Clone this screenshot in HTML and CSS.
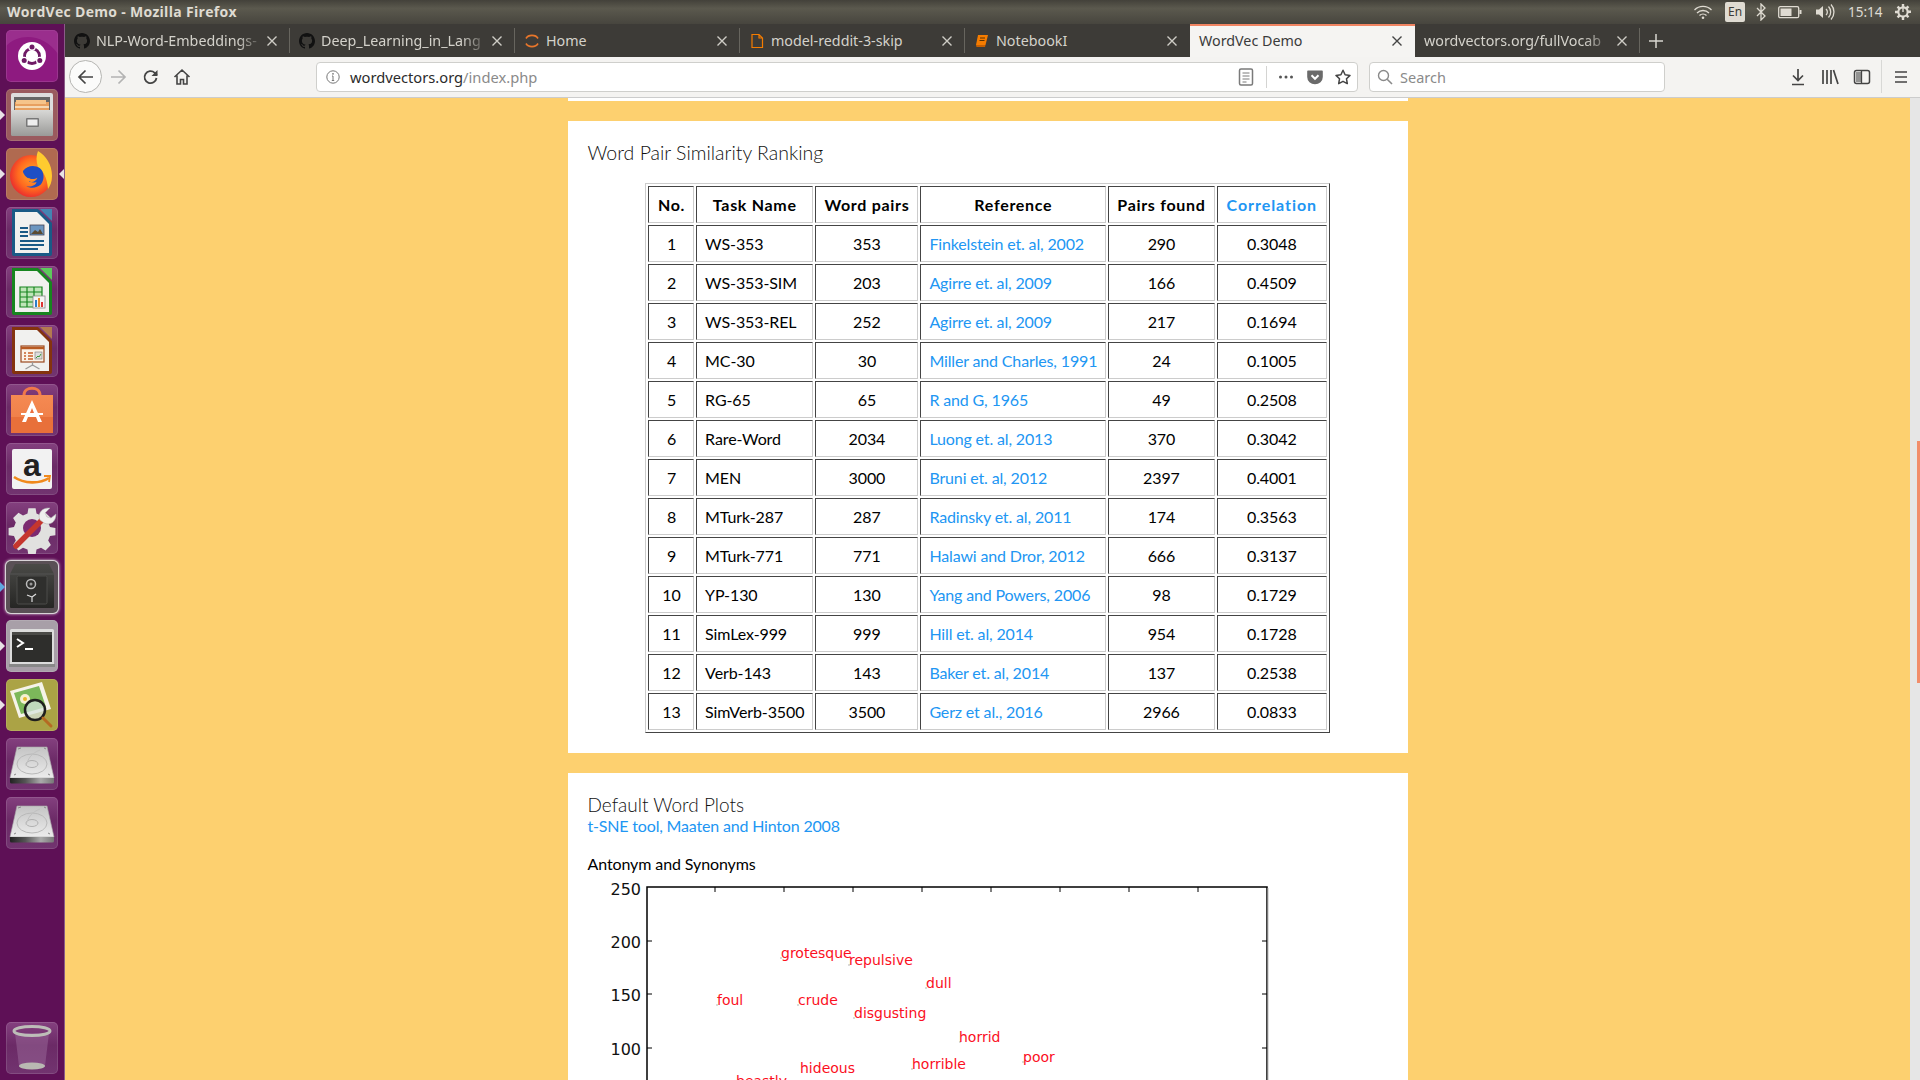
FILE: index.html
```html
<!DOCTYPE html>
<html lang="en">
<head>
<meta charset="utf-8">
<title>WordVec Demo - Mozilla Firefox</title>
<link rel="stylesheet" href="styles.css">
</head>
<body>
<svg class="defs" width="0" height="0" aria-hidden="true">
  <defs>
    <symbol id="gh" viewBox="0 0 16 16"><path fill="#111" d="M8 0C3.6 0 0 3.6 0 8c0 3.5 2.3 6.5 5.5 7.6.4.1.5-.2.5-.4v-1.4c-2.2.5-2.7-1-2.7-1-.4-.9-.9-1.2-.9-1.2-.7-.5.1-.5.1-.5.8.1 1.2.8 1.2.8.7 1.2 1.9.9 2.3.7.1-.5.3-.9.5-1.1-1.8-.2-3.6-.9-3.6-4 0-.9.3-1.6.8-2.1-.1-.2-.4-1 .1-2.1 0 0 .7-.2 2.2.8.6-.2 1.3-.3 2-.3s1.4.1 2 .3c1.5-1 2.2-.8 2.2-.8.4 1.1.2 1.9.1 2.1.5.6.8 1.3.8 2.1 0 3.1-1.9 3.7-3.7 3.9.3.3.6.8.6 1.5v2.2c0 .2.1.5.6.4C13.7 14.5 16 11.5 16 8c0-4.4-3.6-8-8-8z"/></symbol>
    <symbol id="x" viewBox="0 0 12 12"><path d="M1.5 1.5l9 9M10.5 1.5l-9 9" stroke="currentColor" stroke-width="1.4" fill="none"/></symbol>
    <linearGradient id="disk" x1="0" y1="0" x2="0" y2="1"><stop offset="0" stop-color="#c4c4c4"/><stop offset="1" stop-color="#ececec"/></linearGradient>
    <linearGradient id="disk2" x1="0" y1="0" x2="1" y2="0"><stop offset="0" stop-color="#222"/><stop offset=".35" stop-color="#555"/><stop offset=".7" stop-color="#aaa"/><stop offset="1" stop-color="#777"/></linearGradient>
    <linearGradient id="steel" x1="0" y1="0" x2="0" y2="1"><stop offset="0" stop-color="#d8d8d6"/><stop offset="1" stop-color="#9a9a98"/></linearGradient>
    <linearGradient id="shop" x1="0" y1="0" x2="0" y2="1"><stop offset="0" stop-color="#f58a52"/><stop offset="1" stop-color="#ec7a45"/></linearGradient>
    <linearGradient id="safe" x1="0" y1="0" x2="0" y2="1"><stop offset="0" stop-color="#4a4a47"/><stop offset="1" stop-color="#262624"/></linearGradient>
    <radialGradient id="fox" cx=".55" cy=".45" r=".6"><stop offset="0" stop-color="#ffb02e"/><stop offset=".6" stop-color="#ff6a1f"/><stop offset="1" stop-color="#e8262f"/></radialGradient>
    <symbol id="hdd" viewBox="0 0 52 52">
      <path d="M11 9h30l7 31H4z" fill="url(#disk)" stroke="#aaa" stroke-width=".6"/>
      <path d="M4 40h44v4a1.500 1.500 0 0 1-1.500 1.500h-41A1.500 1.500 0 0 1 4 44z" fill="url(#disk2)"/>
      <ellipse cx="26" cy="26" rx="15" ry="10" fill="none" stroke="#b9b9b9"/>
      <ellipse cx="26" cy="26" rx="6" ry="3.500" fill="none" stroke="#b0b0b0"/>
      <path d="M34 12c-8 3-12 8-14 16" fill="none" stroke="#c0c0c0"/>
      <path d="M12 11l3-1M40 11l-2-1M8 37l2-1M44 37l-2-1" stroke="#888"/>
    </symbol>
  </defs>
</svg>

<header class="panel">
  <span class="panel-title">WordVec Demo - Mozilla Firefox</span>
  <div class="indicators">
    <svg class="ind ind-wifi" width="20" height="16" viewBox="0 0 20 16"><path d="M1.500 6a12 12 0 0 1 17 0M4 9a8.500 8.500 0 0 1 12 0M6.500 11.500a5 5 0 0 1 7 0" fill="none" stroke="#dfdbd2" stroke-width="1.300"/><circle cx="10" cy="13.800" r="1.300" fill="#dfdbd2"/></svg>
    <span class="ind-lang">En</span>
    <svg class="ind ind-bt" width="10" height="18" viewBox="0 0 10 18"><path d="M1 5l8 8-4 4V1l4 4-8 8" fill="none" stroke="#dfdbd2" stroke-width="1.300"/></svg>
    <svg class="ind ind-bat" width="24" height="14" viewBox="0 0 24 14"><rect x=".7" y="1.700" width="20" height="11" rx="1.500" fill="none" stroke="#dfdbd2" stroke-width="1.300"/><rect x="2.500" y="3.500" width="11" height="7.500" fill="#dfdbd2"/><rect x="21.500" y="5" width="2" height="4" fill="#dfdbd2"/></svg>
    <svg class="ind ind-vol" width="20" height="18" viewBox="0 0 20 18"><path d="M1 6.500h3l4-3.500v12l-4-3.500H1z" fill="#dfdbd2"/><path d="M11 6a4 4 0 0 1 0 6M13.500 3.500a8 8 0 0 1 0 11M16 1.500a11 11 0 0 1 0 15" fill="none" stroke="#dfdbd2" stroke-width="1.300"/></svg>
    <span class="clock">15:14</span>
    <svg class="ind ind-gear" width="18" height="18" viewBox="0 0 18 18"><path d="M7.800 1h2.400v2.200l1.800.8 1.600-1.500 1.700 1.700-1.500 1.600.8 1.800H17v2.400h-2.400l-.8 1.800 1.500 1.600-1.700 1.700-1.600-1.500-1.800.8V17H7.800v-2.400l-1.800-.8-1.600 1.500-1.700-1.700 1.500-1.600-.8-1.800H1V7.800h2.400l.8-1.800-1.500-1.600 1.700-1.700L6 4.200l1.800-.8z" fill="#dfdbd2"/><circle cx="9" cy="9" r="3.600" fill="#4e4c43"/><path d="M9 5v4" stroke="#dfdbd2" stroke-width="1.400"/></svg>
  </div>
</header>

<div class="desktop">
  <nav class="launcher">
    <div class="tile tile-home">
      <svg viewBox="0 0 52 52" width="52" height="52"><path d="M0 16C14 2 38 4 52 24V4a4 4 0 0 0-4-4H4a4 4 0 0 0-4 4z" fill="#a5429a" opacity=".5"/><circle cx="26" cy="26" r="14" fill="#fff"/><circle cx="26" cy="26" r="7.500" fill="none" stroke="#6f1a66" stroke-width="2.800"/><g fill="#fff"><circle cx="26" cy="17" r="3.800"/><circle cx="18.200" cy="30.500" r="3.800"/><circle cx="33.800" cy="30.500" r="3.800"/></g><g fill="#6f1a66"><circle cx="26" cy="17" r="2.500"/><circle cx="18.200" cy="30.500" r="2.500"/><circle cx="33.800" cy="30.500" r="2.500"/></g></svg>
    </div>
    <div class="tile tile-files">
      <span class="pip"></span>
      <svg viewBox="0 0 52 52" width="52" height="52"><path d="M5 6a2 2 0 0 1 2-2h38a2 2 0 0 1 2 2v16H5z" fill="#ddd"/><rect x="8" y="8" width="36" height="16" fill="#666"/><path d="M9 13h34v10H9z" fill="#e8a060"/><path d="M10 11h30v4H10z" fill="#f6c48a"/><path d="M9 17h34v2H9z" fill="#f5d9b5"/><rect x="5" y="21" width="42" height="26" rx="1.500" fill="url(#steel)"/><rect x="20" y="29" width="13" height="9" rx="1" fill="#777"/><rect x="21.500" y="30.500" width="10" height="6" fill="#eee"/></svg>
    </div>
    <div class="tile tile-fox">
      <span class="pip"></span><span class="pip pip-right"></span>
      <svg viewBox="0 0 52 52" width="52" height="52"><circle cx="25" cy="28" r="21" fill="url(#fox)"/><path d="M32 3c8 5 14 13 14 25 0 6-2 10-4 13-1-12-5-18-10-22-2-6-2-11 0-16z" fill="#ffcb2f"/><g transform="translate(28 28) scale(.85) translate(-28 -28)"><path d="M15 22c5-6 13-8 20-3 5 4 6 13 1 19-4 4-12 5-17 2 6 1 11-1 12-5-3 1-7 1-9-1 2 0 3-1 3-2-3-1-6-2-8-5-1-2-2-3-2-5z" fill="#1f4fc4"/><path d="M21 30c3 2 8 2 11 0-1 3-4 5-7 5-2 0-3-2-4-5z" fill="#ff8a1f"/></g></svg>
    </div>
    <div class="tile">
      <svg viewBox="0 0 52 52" width="52" height="52"><path d="M6 2h26l14 14v31a2 2 0 0 1-2 2H8a2 2 0 0 1-2-2z" fill="#1a5a86"/><path d="M9 5h22l12 12v29H9z" fill="#f1f1ef"/><path d="M34 2h12v12z" fill="#3e8db8" opacity=".9"/><path d="M14 21h8M14 25h8M14 29h8M14 34h24M14 38h24M14 42h18" stroke="#1a5a86" stroke-width="1.800"/><rect x="24" y="18" width="14" height="10" fill="#6c96c0" stroke="#445" stroke-width=".8"/><path d="M25 27l4-4 3 2 2-3 3 5z" fill="#5a4a30"/></svg>
    </div>
    <div class="tile">
      <svg viewBox="0 0 52 52" width="52" height="52"><path d="M6 2h26l14 14v31a2 2 0 0 1-2 2H8a2 2 0 0 1-2-2z" fill="#17851f"/><path d="M9 5h22l12 12v29H9z" fill="#f1f1ef"/><path d="M34 2h12v12z" fill="#5dc95c"/><path d="M14 21h22v20H14z" fill="#bfe5b8"/><path d="M14 21h22v20H14zM14 26h22M14 31h22M14 36h22M21 21v20M28 21v20" fill="none" stroke="#17851f" stroke-width="1.200"/><rect x="27" y="30" width="12" height="12" fill="#f5f5f5" stroke="#888" stroke-width=".8"/><path d="M29 34h2v7h-2z" fill="#2c7fc7"/><path d="M32 32h2v9h-2z" fill="#e8872a"/><path d="M35 36h2v5h-2z" fill="#d33"/></svg>
    </div>
    <div class="tile">
      <svg viewBox="0 0 52 52" width="52" height="52"><path d="M6 2h26l14 14v31a2 2 0 0 1-2 2H8a2 2 0 0 1-2-2z" fill="#84330f"/><path d="M9 5h22l12 12v29H9z" fill="#f1f1ef"/><path d="M34 2h12v12z" fill="#b37a50"/><rect x="15" y="21" width="23" height="16" fill="#fbf3e8" stroke="#9b4a20" stroke-width="1.200"/><path d="M15 23h23" stroke="#b85a22" stroke-width="2.500"/><path d="M18 28h2M22 28h5M18 31h2M22 31h5M18 34h2M22 34h5" stroke="#c9622a" stroke-width="1.500"/><rect x="29" y="27" width="7" height="7" fill="#ddd" stroke="#777" stroke-width=".6"/><path d="M30 33l2-2 1 1 2-3" fill="none" stroke="#3a9a3a"/><path d="M26.500 37v4M26.500 40l-7 4M26.500 40l7 4" stroke="#999" stroke-width="1.300"/></svg>
    </div>
    <div class="tile">
      <svg viewBox="0 0 52 52" width="52" height="52"><path d="M18 11c0-9 16-9 16 0" fill="none" stroke="#f0784a" stroke-width="3"/><path d="M5 11h42v38H5z" fill="url(#shop)"/><path d="M5 33h42v16H5z" fill="#e8703a"/><path d="M26 16l-10 22h4l2-5h8l2 5h4z" fill="#fff"/><path d="M26 24l-2 5h4z" fill="#ec7040"/><path d="M15 29h22v2H15z" fill="#fff"/></svg>
    </div>
    <div class="tile">
      <svg viewBox="0 0 52 52" width="52" height="52"><rect x="6" y="6" width="40" height="40" rx="2" fill="#f2f2f2"/><text x="26" y="33" class="amazon-a">a</text><path d="M8 34c10 7 26 7 35 1" fill="none" stroke="#f08a1d" stroke-width="2.600"/><path d="M38 33l6 0-1 6" fill="none" stroke="#f08a1d" stroke-width="1.800"/></svg>
    </div>
    <div class="tile">
      <svg viewBox="0 0 52 52" width="52" height="52"><path d="M22 4h8l1 6 5 2 5-3 6 6-3 5 2 5 6 1v8l-6 1-2 5 3 5-6 6-5-3-5 2-1 6h-8l-1-6-5-2-5 3-6-6 3-5-2-5-6-1v-8l6-1 2-5-3-5 6-6 5 3 5-2z" transform="translate(26 26) scale(.9) translate(-26 -26)" fill="#e1e1df"/><circle cx="26" cy="26" r="9" fill="#7c2a70"/><path d="M38 16L10 44" stroke="#c5362e" stroke-width="5.500" stroke-linecap="round"/><path d="M34 18c-3-6 2-13 10-12l-5 5 2 4 4 1 5-4c0 8-6 12-12 9z" fill="#eee" stroke="#aaa" stroke-width=".5"/></svg>
    </div>
    <div class="tile tile-safe">
      <span class="pip pip-blue"></span>
      <svg viewBox="0 0 52 52" width="52" height="52"><path d="M9 3h34l5 10v33a1 1 0 0 1-1 1H5a1 1 0 0 1-1-1V13z" fill="url(#safe)"/><path d="M4 13h44" stroke="#555" stroke-width="1"/><rect x="11" y="15" width="30" height="28" rx="1.500" fill="#2f2f2d" stroke="#4d4d4a"/><circle cx="25" cy="23" r="4.500" fill="none" stroke="#bbb" stroke-width="1.500"/><circle cx="25" cy="23" r="1.500" fill="#999"/><path d="M26 36v5M26 36l-5-2M26 36l4-3" stroke="#ddd" stroke-width="1.200"/></svg>
    </div>
    <div class="tile tile-term">
      <span class="pip"></span>
      <svg viewBox="0 0 52 52" width="52" height="52"><rect x="4" y="9" width="44" height="36" rx="1.500" fill="#dcdcdc"/><rect x="6" y="12" width="40" height="30" fill="#2e2e2c"/><path d="M6 12h40v3H6z" fill="#4a4a47"/><path d="M11 19l6 4-6 4" fill="none" stroke="#fff" stroke-width="2"/><path d="M19 29h8" stroke="#fff" stroke-width="2"/><rect x="3" y="44" width="46" height="3" fill="#888"/></svg>
    </div>
    <div class="tile tile-viewer">
      <span class="pip"></span>
      <svg viewBox="0 0 52 52" width="52" height="52"><path d="M4 12l32-9 9 27-32 9z" fill="#f5f3e8"/><path d="M8 14l25-7 7 21-25 7z" fill="#7cb85a"/><circle cx="19" cy="20" r="5" fill="#f5f1d0"/><circle cx="19" cy="20" r="2" fill="#e8b82a"/><circle cx="29" cy="31" r="10" fill="#d7e4de" fill-opacity=".75" stroke="#1f1f1f" stroke-width="2.500"/><path d="M37 39l8 8" stroke="#b56a22" stroke-width="3" stroke-linecap="round"/></svg>
    </div>
    <div class="tile"><svg width="52" height="52"><use href="#hdd"/></svg></div>
    <div class="tile"><svg width="52" height="52"><use href="#hdd"/></svg></div>
    <div class="tile tile-trash">
      <svg viewBox="0 0 52 52" width="52" height="52"><path d="M9 11l4 33c0 3 26 3 26 0l4-33z" fill="#a070a0" fill-opacity=".45"/><ellipse cx="26" cy="44" rx="13" ry="3.500" fill="#b9b9b2"/><ellipse cx="26" cy="9" rx="18" ry="4.500" fill="none" stroke="#bdbdb8" stroke-width="3"/></svg>
    </div>
  </nav>

  <div class="browser">
    <div class="tabstrip">
      <div class="tab">
        <svg class="favicon" width="16" height="16"><use href="#gh"/></svg>
        <span class="tab-label tab-fade">NLP-Word-Embeddings-</span>
        <svg class="tab-x" width="12" height="12"><use href="#x"/></svg>
      </div>
      <div class="tab">
        <svg class="favicon" width="16" height="16"><use href="#gh"/></svg>
        <span class="tab-label tab-fade">Deep_Learning_in_Lang</span>
        <svg class="tab-x" width="12" height="12"><use href="#x"/></svg>
      </div>
      <div class="tab">
        <svg class="favicon" width="16" height="16" viewBox="0 0 16 16"><path d="M2 5.500a6.500 5 0 0 1 12 0M2 10.500a6.500 5 0 0 0 12 0" fill="none" stroke="#e8762b" stroke-width="1.600"/></svg>
        <span class="tab-label">Home</span>
        <svg class="tab-x" width="12" height="12"><use href="#x"/></svg>
      </div>
      <div class="tab">
        <svg class="favicon" width="16" height="16" viewBox="0 0 16 16"><path d="M3 1.500h7l3.500 3.500v9.500H3zM10 1.500V5h3.500" fill="none" stroke="#f57c00" stroke-width="1.200"/></svg>
        <span class="tab-label">model-reddit-3-skip</span>
        <svg class="tab-x" width="12" height="12"><use href="#x"/></svg>
      </div>
      <div class="tab">
        <svg class="favicon" width="16" height="16" viewBox="0 0 16 16"><path d="M4 2h10l-2.500 10H2z" fill="#f57c00"/><path d="M2 12h9.500l-.5 2H2.500z" fill="#c85f00"/><path d="M6 5h5M5.500 7.500h5" stroke="#5a3000" stroke-width="1"/></svg>
        <span class="tab-label">NotebookI</span>
        <svg class="tab-x" width="12" height="12"><use href="#x"/></svg>
      </div>
      <div class="tab tab-active">
        <span class="tab-label">WordVec Demo</span>
        <svg class="tab-x" width="12" height="12"><use href="#x"/></svg>
      </div>
      <div class="tab">
        <span class="tab-label tab-fade">wordvectors.org/fullVocab</span>
        <svg class="tab-x" width="12" height="12"><use href="#x"/></svg>
      </div>
      <svg class="tab-new" width="16" height="16" viewBox="0 0 16 16"><path d="M8 1v14M1 8h14" stroke="#d8d6d0" stroke-width="1.500"/></svg>
    </div>

    <div class="toolbar">
      <button class="back" type="button" aria-label="Back"><svg width="18" height="18" viewBox="0 0 18 18"><path d="M2 9h14M8.500 2.500L2 9l6.500 6.500" fill="none" stroke="#444" stroke-width="1.700"/></svg></button>
      <span class="tool tool-fwd"><svg width="18" height="18" viewBox="0 0 18 18"><path d="M2 9h14M9.500 2.500L16 9l-6.500 6.500" fill="none" stroke="#b3b3b3" stroke-width="1.700"/></svg></span>
      <span class="tool tool-reload"><svg width="18" height="18" viewBox="0 0 18 18"><path d="M14.500 10a6 6 0 1 1-1.800-5.200L15 7" fill="none" stroke="#444" stroke-width="1.800"/><path d="M15.500 2v6h-6z" fill="#444"/></svg></span>
      <span class="tool tool-home"><svg width="18" height="18" viewBox="0 0 18 18"><path d="M1.500 9L9 2l7.500 7M4 7.500V16h3.500v-4.500h3V16H14V7.500" fill="none" stroke="#444" stroke-width="1.600"/></svg></span>

      <div class="urlbar">
        <svg class="url-info" width="14" height="14" viewBox="0 0 14 14"><circle cx="7" cy="7" r="6.200" fill="none" stroke="#777" stroke-width="1"/><path d="M7 6v4.500M5.800 10.500h2.400M6 6h1" stroke="#777" fill="none"/><circle cx="7" cy="3.800" r=".9" fill="#777"/></svg>
        <span class="url-text"><span class="url-host">wordvectors.org</span>/index.php</span>
        <svg class="url-reader" width="16" height="18" viewBox="0 0 16 18"><rect x="1.500" y="1" width="13" height="16" rx="1.500" fill="none" stroke="#7a7a7a" stroke-width="1.500"/><path d="M4.500 5h7M4.500 8h7M4.500 11h7M4.500 14h4" stroke="#7a7a7a"/></svg>
        <span class="url-sep"></span>
        <svg class="url-dots" width="16" height="4" viewBox="0 0 16 4"><circle cx="2.500" cy="2" r="1.500" fill="#555"/><circle cx="8" cy="2" r="1.500" fill="#555"/><circle cx="13.500" cy="2" r="1.500" fill="#555"/></svg>
        <svg class="url-pocket" width="16" height="16" viewBox="0 0 16 16"><path d="M1 1.500h14a.8.8 0 0 1 .8.8V8A7.800 7.300 0 0 1 .2 8V2.300A.8.8 0 0 1 1 1.500z" fill="#6a6a6a"/><path d="M4.500 6.300L8 9.800l3.500-3.500" fill="none" stroke="#fff" stroke-width="2"/></svg>
        <svg class="url-star" width="16" height="16" viewBox="0 0 16 16"><path d="M8 1.300l2.100 4.400 4.900.7-3.500 3.400.8 4.800L8 12.300l-4.300 2.300.8-4.800L1 6.400l4.900-.7z" fill="none" stroke="#444" stroke-width="1.500" stroke-linejoin="round"/></svg>
      </div>

      <div class="searchbar">
        <svg width="16" height="16" viewBox="0 0 16 16"><circle cx="6.500" cy="6.500" r="5" fill="none" stroke="#8a8a8a" stroke-width="1.400"/><path d="M10.200 10.200L15 15" stroke="#8a8a8a" stroke-width="1.600"/></svg>
        <span class="search-text">Search</span>
      </div>

      <span class="tool tool-dl"><svg width="16" height="18" viewBox="0 0 16 18"><path d="M8 1v11M3 7.500L8 12.500l5-5M2 16.500h12" fill="none" stroke="#444" stroke-width="1.700"/></svg></span>
      <span class="tool tool-lib"><svg width="18" height="16" viewBox="0 0 18 16"><path d="M2 1v14M6 1v14M10 1v14M12.500 1l4.500 14" fill="none" stroke="#444" stroke-width="1.700"/></svg></span>
      <span class="tool tool-side"><svg width="18" height="16" viewBox="0 0 18 16"><rect x="1.500" y="1.500" width="15" height="13" rx="2" fill="none" stroke="#444" stroke-width="1.500"/><rect x="3" y="3" width="5" height="10" fill="#444" opacity=".55"/><path d="M8.500 2v12" stroke="#444" stroke-width="1.300"/></svg></span>
      <span class="tool-sep"></span>
      <span class="tool tool-menu"><svg width="16" height="14" viewBox="0 0 16 14"><path d="M2 2h12M2 7h12M2 12h12" stroke="#444" stroke-width="1.700"/></svg></span>
    </div>

    <div class="viewport">
      <main class="page">
        <section class="card card-stub"></section>

        <section class="card">
          <h5 class="card-title">Word Pair Similarity Ranking</h5>
          <table class="ranking">
            <thead>
              <tr><th>No.</th><th>Task Name</th><th>Word pairs</th><th>Reference</th><th>Pairs found</th><th class="link">Correlation</th></tr>
            </thead>
            <tbody>
              <tr><td>1</td><td class="left">WS-353</td><td>353</td><td class="left"><a href="#">Finkelstein et. al, 2002</a></td><td>290</td><td>0.3048</td></tr>
              <tr><td>2</td><td class="left">WS-353-SIM</td><td>203</td><td class="left"><a href="#">Agirre et. al, 2009</a></td><td>166</td><td>0.4509</td></tr>
              <tr><td>3</td><td class="left">WS-353-REL</td><td>252</td><td class="left"><a href="#">Agirre et. al, 2009</a></td><td>217</td><td>0.1694</td></tr>
              <tr><td>4</td><td class="left">MC-30</td><td>30</td><td class="left"><a href="#">Miller and Charles, 1991</a></td><td>24</td><td>0.1005</td></tr>
              <tr><td>5</td><td class="left">RG-65</td><td>65</td><td class="left"><a href="#">R and G, 1965</a></td><td>49</td><td>0.2508</td></tr>
              <tr><td>6</td><td class="left">Rare-Word</td><td>2034</td><td class="left"><a href="#">Luong et. al, 2013</a></td><td>370</td><td>0.3042</td></tr>
              <tr><td>7</td><td class="left">MEN</td><td>3000</td><td class="left"><a href="#">Bruni et. al, 2012</a></td><td>2397</td><td>0.4001</td></tr>
              <tr><td>8</td><td class="left">MTurk-287</td><td>287</td><td class="left"><a href="#">Radinsky et. al, 2011</a></td><td>174</td><td>0.3563</td></tr>
              <tr><td>9</td><td class="left">MTurk-771</td><td>771</td><td class="left"><a href="#">Halawi and Dror, 2012</a></td><td>666</td><td>0.3137</td></tr>
              <tr><td>10</td><td class="left">YP-130</td><td>130</td><td class="left"><a href="#">Yang and Powers, 2006</a></td><td>98</td><td>0.1729</td></tr>
              <tr><td>11</td><td class="left">SimLex-999</td><td>999</td><td class="left"><a href="#">Hill et. al, 2014</a></td><td>954</td><td>0.1728</td></tr>
              <tr><td>12</td><td class="left">Verb-143</td><td>143</td><td class="left"><a href="#">Baker et. al, 2014</a></td><td>137</td><td>0.2538</td></tr>
              <tr><td>13</td><td class="left">SimVerb-3500</td><td>3500</td><td class="left"><a href="#">Gerz et al., 2016</a></td><td>2966</td><td>0.0833</td></tr>
            </tbody>
          </table>
        </section>

        <section class="card">
          <h5 class="card-title card-title-tight">Default Word Plots</h5>
          <a class="plot-link" href="#">t-SNE tool, Maaten and Hinton 2008</a>
          <h6 class="plot-name">Antonym and Synonyms</h6>
          <svg class="plot" width="700" height="240" viewBox="588 875 700 240">
            <rect x="647" y="887" width="620" height="300" fill="#fff" stroke="#000" stroke-width="1.500"/>
            <path d="M1268 888v300" stroke="#bbb"/>
            <path d="M715 887v5M784 887v5M853 887v5M922 887v5M991 887v5M1060 887v5M1129 887v5M1198 887v5M647 941h5M647 994h5M647 1048h5M1267 941h-5M1267 994h-5M1267 1048h-5" stroke="#000" fill="none"/>
            <g class="tick"><text x="641" y="895">250</text><text x="641" y="948">200</text><text x="641" y="1001">150</text><text x="641" y="1055">100</text></g>
            <g fill="#aaa">
              <circle cx="781" cy="958" r=".8"/><circle cx="849" cy="965" r=".8"/><circle cx="926" cy="988" r=".8"/><circle cx="717" cy="1005" r=".8"/><circle cx="798" cy="1005" r=".8"/><circle cx="854" cy="1018" r=".8"/><circle cx="960" cy="1042" r=".8"/><circle cx="1023" cy="1062" r=".8"/><circle cx="912" cy="1069" r=".8"/>
            </g>
            <g class="word">
              <text x="781" y="958">grotesque</text>
              <text x="849" y="965">repulsive</text>
              <text x="926" y="988">dull</text>
              <text x="717" y="1005">foul</text>
              <text x="798" y="1005">crude</text>
              <text x="854" y="1018">disgusting</text>
              <text x="959" y="1042">horrid</text>
              <text x="1023" y="1062">poor</text>
              <text x="912" y="1069">horrible</text>
              <text x="800" y="1073">hideous</text>
              <text x="736" y="1086">beastly</text>
            </g>
          </svg>
        </section>
      </main>
      <div class="scrolltrack"><span class="scrollthumb"></span></div>
    </div>
  </div>
</div>
</body>
</html>
```

FILE: styles.css
```css
* { box-sizing: border-box; }
html, body { margin: 0; padding: 0; height: 100%; overflow: hidden; }
body { display: flex; flex-direction: column; width: 1920px; height: 1080px; font-family: "Noto Sans", sans-serif; background: #3c3b37; }
.defs { position: absolute; }

/* top panel */
.panel { flex: 0 0 24px; display: flex; align-items: center; justify-content: space-between; padding-left: 7px; background: linear-gradient(#43413a, #5b594e 35%, #47453e); }
.panel-title { font: 700 14px/24px "Open Sans", sans-serif; letter-spacing: .3px; color: #dfdbd2; }
.indicators { display: flex; align-items: center; height: 24px; }
.ind { display: block; flex: none; }
.ind-wifi { margin-right: 12px; }
.ind-lang { width: 20px; height: 20px; margin-right: 11px; background: #dfdbd2; border-radius: 2px; color: #3c3b37; font: 12px/20px "Noto Sans", sans-serif; text-align: center; }
.ind-bt { margin-right: 12px; }
.ind-bat { margin-right: 13px; }
.ind-vol { margin-right: 13px; }
.clock { width: 36px; margin-right: 10px; font: 13.500px/24px "Noto Sans", sans-serif; color: #dfdbd2; white-space: nowrap; }
.ind-gear { margin-right: 8px; }

.desktop { flex: 1; display: flex; min-height: 0; }

/* launcher */
.launcher { flex: 0 0 65px; display: flex; flex-direction: column; gap: 7px; padding: 6px; background: #5e1056; border-right: 1px solid #8b5b88; }
.tile { position: relative; flex: 0 0 52px; width: 52px; height: 52px; border-radius: 5px; background: linear-gradient(#84407f, #6b2a66 45%, #723470); box-shadow: inset 0 0 0 1px rgba(255,255,255,.12); }
.tile svg { display: block; }
.tile-home { background: #8e1a80; overflow: hidden; }
.tile-files { background: #9a5a5e; }
.tile-fox { background: #b06a50; }
.tile-safe { background: #5a5056; box-shadow: 0 0 0 1px #d9d4d8, 0 0 3px 1px #e8e2e6; }
.tile-term { background: #a89fa8; }
.tile-viewer { background: #aba345; }
.tile-trash { margin-top: auto; }
.pip { position: absolute; left: -6px; top: 21px; width: 0; height: 0; border-top: 5px solid transparent; border-bottom: 5px solid transparent; border-left: 5px solid #e8e2e6; }
.pip-right { left: auto; right: -6px; border-left: 0; border-right: 5px solid #e8e2e6; }
.pip-blue { border-left-color: #5fa8e0; }
.amazon-a { font: 700 32px "Liberation Sans", sans-serif; fill: #222; text-anchor: middle; }

.browser { flex: 1; min-width: 0; display: flex; flex-direction: column; }

/* tabs */
.tabstrip { flex: 0 0 33px; display: flex; align-items: stretch; background: #3d3b37; }
.tab { position: relative; flex: none; width: 225px; min-width: 0; display: flex; align-items: center; padding: 0 12px 0 9px; color: #d4d2cb; font-size: 14.300px; }
.tab::after { content: ""; position: absolute; right: 0; top: 4px; bottom: 4px; width: 1px; background: #67655e; }
.favicon { flex: none; margin-right: 6px; }
.tab-label { flex: 1; min-width: 0; white-space: nowrap; }
.tab-fade { -webkit-mask-image: linear-gradient(to right, #000 86%, transparent 102%); mask-image: linear-gradient(to right, #000 86%, transparent 102%); }
.tab-x { flex: none; margin-left: 6px; color: #cfcdc6; }
.tab-active { padding-bottom: 2px; background: #f5f4f2; color: #3b3b3b; border-top: 2px solid #f08462; }
.tab-active::after, .tab:nth-child(5)::after { display: none; }
.tab-active .tab-x { color: #444; }
.tab-new { align-self: center; margin-left: 8px; }

/* toolbar */
.toolbar { flex: 0 0 41px; display: flex; align-items: center; padding: 0 0 1px 4px; background: #f4f3f1; border-bottom: 1px solid #ccc; }
.back { flex: none; display: flex; align-items: center; justify-content: center; width: 33px; height: 33px; padding: 0; background: #fbfbfa; border: 1px solid #b5b5b2; border-radius: 50%; }
.back svg, .tool svg { display: block; }
.tool { flex: none; display: flex; align-items: center; justify-content: center; width: 26px; height: 26px; }
.tool-fwd { margin-left: 3px; }
.tool-reload { margin-left: 7px; }
.tool-home { margin-left: 5px; }
.urlbar { flex: none; display: flex; align-items: center; width: 1042px; height: 30px; margin-left: 121px; padding: 0 6px 0 9px; background: #fff; border: 1px solid #cfcfcc; border-radius: 4px; color: #8a8a8a; font-size: 14.700px; }
.url-info { flex: none; margin-right: 10px; }
.url-text { flex: 1; white-space: nowrap; }
.url-host { color: #2b2b2b; }
.url-reader { flex: none; }
.url-sep { flex: none; width: 1px; height: 22px; margin-left: 12px; background: #d4d4d2; }
.url-dots { flex: none; margin-left: 11px; }
.url-pocket { flex: none; margin-left: 13px; }
.url-star { flex: none; margin-left: 12px; }
.searchbar { flex: none; display: flex; align-items: center; gap: 7px; width: 296px; height: 30px; margin-left: 11px; padding-left: 7px; background: #fff; border: 1px solid #cfcfcc; border-radius: 4px; color: #8a8a8a; font-size: 14.500px; }
.tool-dl { margin-left: 120px; }
.tool-lib { margin-left: 6px; }
.tool-side { margin-left: 6px; }
.tool-sep { flex: none; width: 1px; height: 33px; margin-left: 6px; background: #d8d8d6; }
.tool-menu { margin-left: 6px; }

/* page */
.viewport { flex: 1; min-height: 0; display: flex; background: #fdd06f; }
.page { flex: 1; min-width: 0; overflow: hidden; display: flex; flex-direction: column; align-items: center; gap: 20px; }
.scrolltrack { position: relative; flex: 0 0 10px; background: #e6e6e6; }
.scrollthumb { position: absolute; right: 0; top: 343px; width: 3px; height: 242px; background: #f28d69; }
.card { flex: none; width: 840px; padding: 20px; background: #fff; font: 16px/19px Lato, sans-serif; color: #000; }
.card-stub { height: 3px; padding: 0; }
.card-title { margin: 1px 0 19px; font: 300 19.500px/22px Lato, sans-serif; color: #111; }
.card-title-tight { margin: 0; font-size: 19px; line-height: 23px; }
.ranking { margin: 0 auto; border-collapse: separate; border-spacing: 2px; border: 1px solid; border-color: #ccc #444 #444 #ccc; }
.ranking th, .ranking td { padding: 8px; border: 1px solid; border-color: #444 #ccc #ccc #444; text-align: center; white-space: nowrap; }
.ranking th:first-child, .ranking td:first-child { padding-left: 9px; }
.ranking th:last-child, .ranking td:last-child { padding-left: 9px; padding-right: 9px; }
.ranking th { letter-spacing: .7px; }
.ranking td { letter-spacing: -.1px; }
.ranking a { letter-spacing: -.15px; }
.ranking .left { text-align: left; }
.ranking a, .plot-link { color: #2196f3; text-decoration: none; }
.ranking .link { color: #2196f3; letter-spacing: .95px; }
.plot-link { display: block; letter-spacing: -.18px; }
.plot-name { margin: 19px 0 0; font: 400 16px/19px Lato, sans-serif; letter-spacing: -.1px; }
.plot { display: block; margin-top: 2px; }
.tick text { font: 16px "DejaVu Sans", sans-serif; fill: #111; text-anchor: end; }
.word text { font: 14px "DejaVu Sans", sans-serif; fill: #fb0f1e; }
```
